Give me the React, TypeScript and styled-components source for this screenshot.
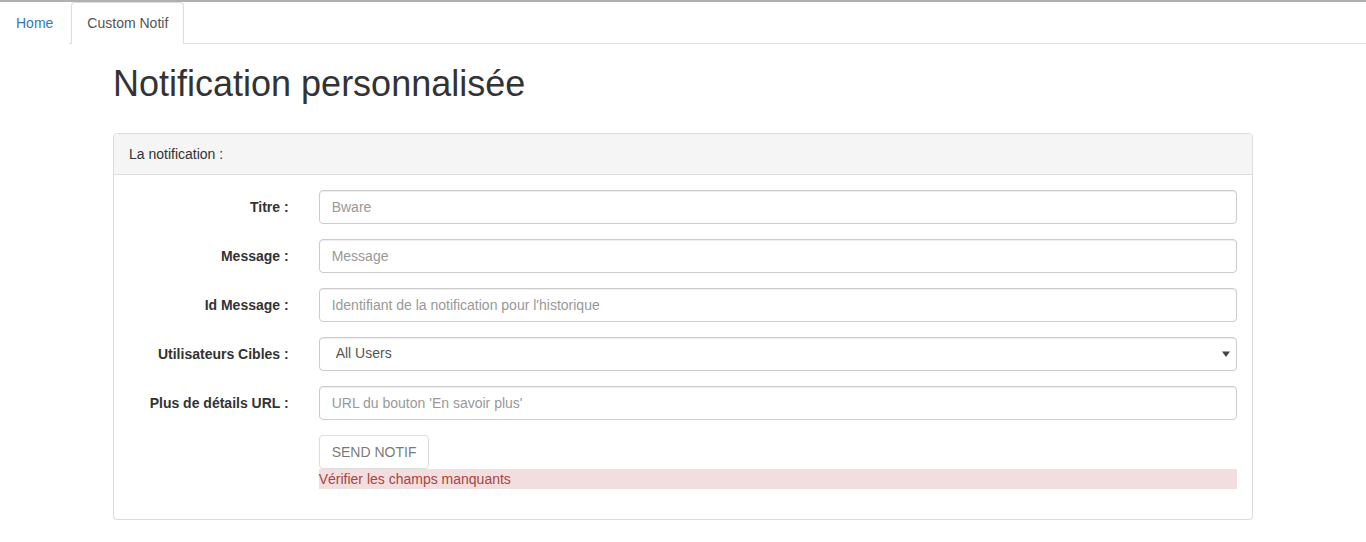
import React from "react";
import styled, { createGlobalStyle } from "styled-components";

const Global = createGlobalStyle`
  html, body { margin: 0; padding: 0; background: #fff; }
  body {
    border-top: 2px solid #b0b0b0;
    font-family: "Liberation Sans", Arial, sans-serif;
    font-size: 14px;
    line-height: 1.42857;
    color: #333;
  }
  * { box-sizing: border-box; }
`;

const Tabs = styled.ul`
  display: flex;
  list-style: none;
  margin: 0;
  padding: 0;
  border-bottom: 1px solid #ddd;
`;

const Tab = styled.li<{ $active?: boolean }>`
  margin: 0 2px -1px 0;
  a {
    display: block;
    padding: 10px 15px;
    line-height: 20px;
    border: 1px solid ${(p) => (p.$active ? "#ddd" : "transparent")};
    border-bottom-color: ${(p) => (p.$active ? "#fff" : "transparent")};
    border-radius: 4px 4px 0 0;
    background: #fff;
    color: ${(p) => (p.$active ? "#555" : "#337ab7")};
    text-decoration: none;
  }
`;

const Container = styled.div`
  width: 1170px;
  margin: 0 auto;
  padding: 0 15px;
`;

const Title = styled.h1`
  font-size: 36px;
  font-weight: 500;
  line-height: 1.1;
  margin: 20px 0 29px;
  color: #333;
`;

const Panel = styled.div`
  border: 1px solid #ddd;
  border-radius: 4px;
  box-shadow: 0 1px 1px rgba(0, 0, 0, 0.05);
  background: #fff;
`;

const PanelHeading = styled.div`
  padding: 10px 15px;
  line-height: 20px;
  background: #f5f5f5;
  border-bottom: 1px solid #ddd;
  border-radius: 3px 3px 0 0;
`;

const PanelBody = styled.div`
  padding: 15px 0;
`;

const FormGroup = styled.div`
  display: grid;
  grid-template-columns: 16.6667% 83.3333%;
  margin-bottom: 15px;
`;

const Label = styled.label`
  padding: 7px 15px 0;
  text-align: right;
  font-weight: bold;
  line-height: 20px;
`;

const Field = styled.div`
  padding: 0 15px;
  position: relative;
`;

const Input = styled.input`
  display: block;
  width: 100%;
  height: 34px;
  padding: 6px 12px;
  font: inherit;
  font-size: 14px;
  color: #555;
  border: 1px solid #ccc;
  border-radius: 4px;
  box-shadow: inset 0 1px 1px rgba(0, 0, 0, 0.075);
  &::placeholder { color: #999; }
`;

const Select = styled.select`
  display: block;
  width: 100%;
  height: 34px;
  padding: 6px 12px 6px 16px;
  font: inherit;
  font-size: 14px;
  color: #555;
  border: 1px solid #ccc;
  border-radius: 4px;
  background: #fff;
  appearance: none;
  box-shadow: inset 0 1px 1px rgba(0, 0, 0, 0.075);
`;

const Arrow = styled.svg`
  position: absolute;
  right: 22px;
  top: 14px;
  pointer-events: none;
`;

const Button = styled.button`
  display: inline-block;
  height: 34px;
  padding: 6px 12px;
  font: inherit;
  font-size: 14px;
  line-height: 20px;
  color: #333;
  background: #fff;
  border: 1px solid #ccc;
  border-radius: 4px;
  opacity: 0.65;
`;

const Alert = styled.div`
  background: #f2dede;
  color: #a94442;
  line-height: 20px;
`;

const fields = [
  { label: "Titre :", placeholder: "Bware" },
  { label: "Message :", placeholder: "Message" },
  { label: "Id Message :", placeholder: "Identifiant de la notification pour l'historique" },
];

export default function App() {
  return (
    <>
      <Global />
      <Tabs>
        <Tab><a href="#">Home</a></Tab>
        <Tab $active><a href="#">Custom Notif</a></Tab>
      </Tabs>
      <Container>
        <Title>Notification personnalisée</Title>
        <Panel>
          <PanelHeading>La notification :</PanelHeading>
          <PanelBody>
            {fields.map((f) => (
              <FormGroup key={f.label}>
                <Label>{f.label}</Label>
                <Field>
                  <Input placeholder={f.placeholder} />
                </Field>
              </FormGroup>
            ))}
            <FormGroup>
              <Label>Utilisateurs Cibles :</Label>
              <Field>
                <Select defaultValue="all">
                  <option value="all">All Users</option>
                </Select>
                <Arrow width="8" height="6" viewBox="0 0 8 6">
                  <path d="M0 0.5 H8 L4 6 Z" fill="#444" />
                </Arrow>
              </Field>
            </FormGroup>
            <FormGroup>
              <Label>Plus de détails URL :</Label>
              <Field>
                <Input placeholder="URL du bouton 'En savoir plus'" />
              </Field>
            </FormGroup>
            <FormGroup>
              <div />
              <Field>
                <Button disabled>SEND NOTIF</Button>
                <Alert>Vérifier les champs manquants</Alert>
              </Field>
            </FormGroup>
          </PanelBody>
        </Panel>
      </Container>
    </>
  );
}
